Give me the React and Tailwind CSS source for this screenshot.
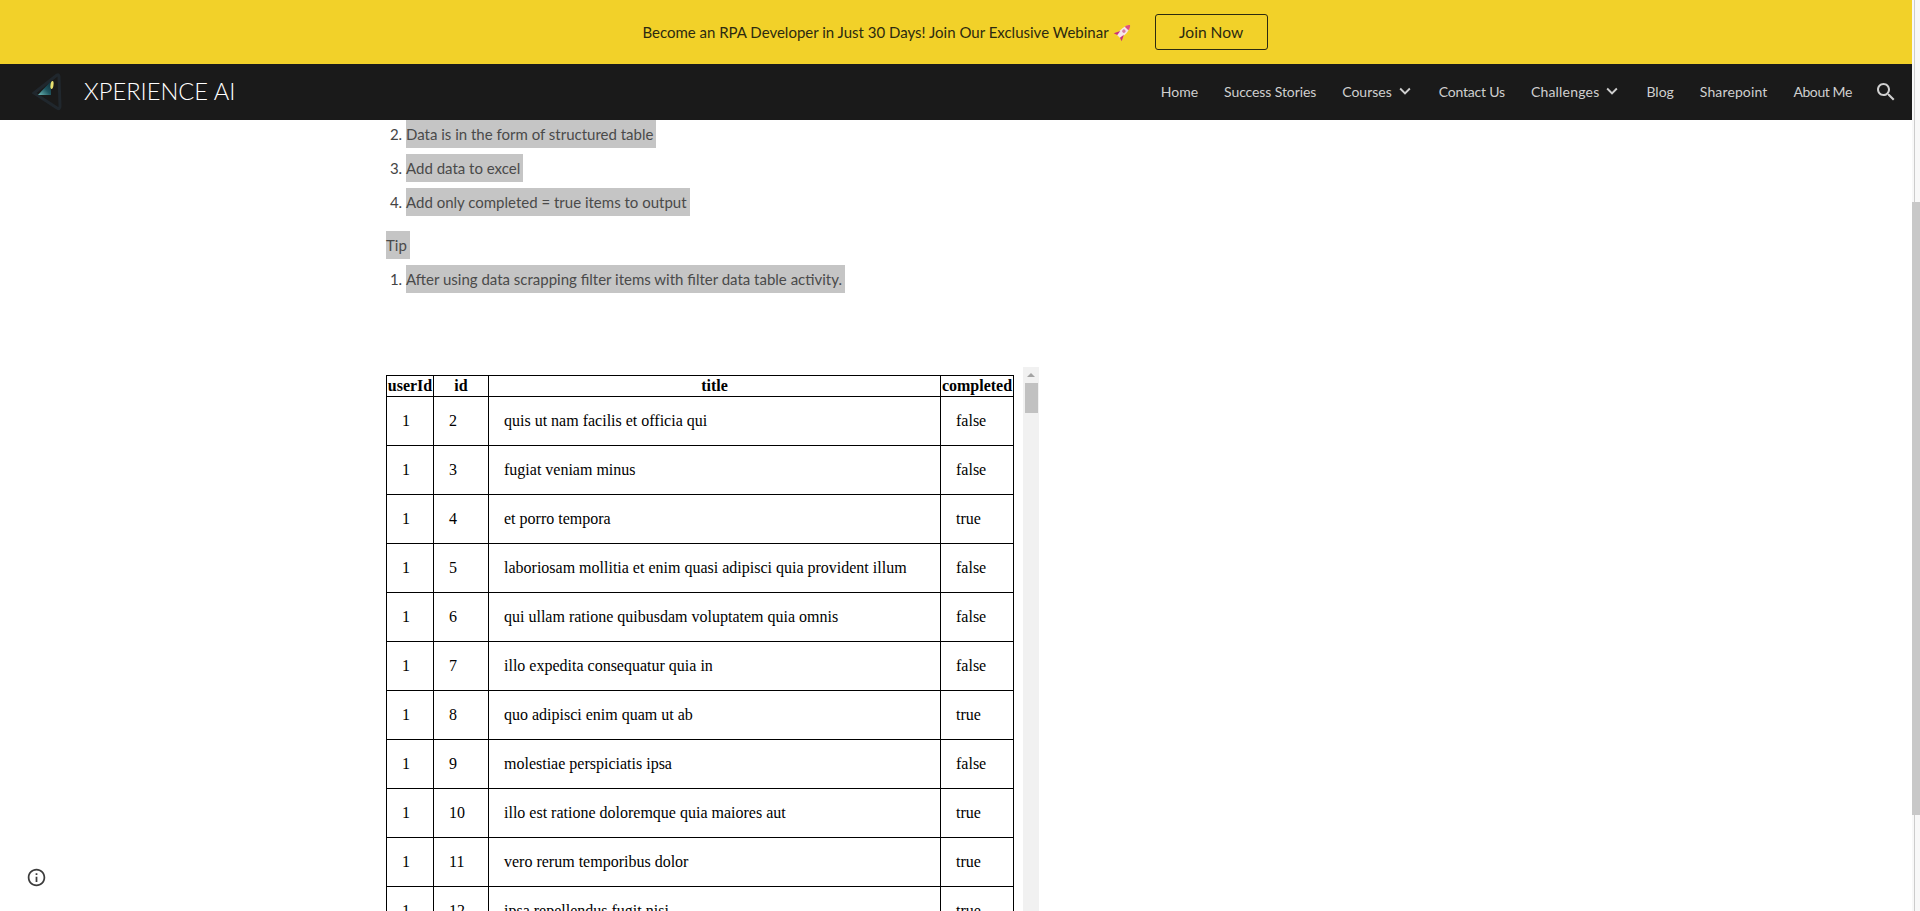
const navItems = [
  { label: "Home" },
  { label: "Success Stories", fit: "tracking-[-0.1px]" },
  { label: "Courses", menu: true },
  { label: "Contact Us", fit: "tracking-[-0.2px]" },
  { label: "Challenges", menu: true, fit: "tracking-[0.2px]" },
  { label: "Blog" },
  { label: "Sharepoint", fit: "tracking-[0.12px]" },
  { label: "About Me", fit: "tracking-[-0.4px]" },
];

const rows = [
  [1, 2, "quis ut nam facilis et officia qui", "false"],
  [1, 3, "fugiat veniam minus", "false"],
  [1, 4, "et porro tempora", "true"],
  [1, 5, "laboriosam mollitia et enim quasi adipisci quia provident illum", "false"],
  [1, 6, "qui ullam ratione quibusdam voluptatem quia omnis", "false"],
  [1, 7, "illo expedita consequatur quia in", "false"],
  [1, 8, "quo adipisci enim quam ut ab", "true"],
  [1, 9, "molestiae perspiciatis ipsa", "false"],
  [1, 10, "illo est ratione doloremque quia maiores aut", "true"],
  [1, 11, "vero rerum temporibus dolor", "true"],
  [1, 12, "ipsa repellendus fugit nisi", "true"],
];

const Logo = () => (
  <svg width="30" height="38" viewBox="0 0 30 38" className="shrink-0">
    <defs>
      <linearGradient id="wedge" x1="0" y1="1" x2="1" y2="0">
        <stop offset="0" stopColor="#6fbcb8" />
        <stop offset="0.5" stopColor="#1f5660" />
        <stop offset="1" stopColor="#0f2a33" />
      </linearGradient>
    </defs>
    <path d="M2 20 L25 2 Q27 1 27 4 L28 33 Q28 37 25 35 Z" fill="none" stroke="#20272d" strokeWidth="3" />
    <path d="M6 22 L19 8 L19 22 Z" fill="url(#wedge)" />
    <ellipse cx="20" cy="12" rx="1.5" ry="4" fill="#e8e070" transform="rotate(8 20 12)" />
  </svg>
);

const Rocket = () => (
  <svg width="20" height="20" viewBox="0 0 16 16" className="shrink-0">
    <g transform="rotate(45 8 8)">
      <path d="M8 0 C11 3 11 9 10 13 L6 13 C5 9 5 3 8 0 Z" fill="#f6e6ea" />
      <path d="M8 0 C9 1 10 2 10 4 L6 4 C6 2 7 1 8 0 Z" fill="#e0527a" />
      <path d="M6 9 L3.5 14 L6.5 13 Z M10 9 L12.5 14 L9.5 13 Z" fill="#c9327a" />
      <circle cx="8" cy="7" r="1.4" fill="#d77aa0" />
    </g>
  </svg>
);

const Highlight = ({ children }) => (
  <span className="inline-block h-7 bg-[#c5c5c5] pr-[3px] text-[#4a4a4a] leading-7">{children}</span>
);

export default function App() {
  return (
    <div className="flex h-screen overflow-hidden bg-white font-['Lato',sans-serif]">
      <div className="relative flex min-w-0 flex-1 flex-col">
        <div className="flex h-16 shrink-0 items-center justify-center bg-[#f2d129] pr-[2px]">
          <span className="text-[15px] text-[#2c2a10]">
            Become an RPA Developer in Just 30 Days! Join Our Exclusive Webinar
          </span>
          <span className="ml-1">
            <Rocket />
          </span>
          <button className="ml-[22px] h-9 w-[113px] rounded-[3px] border border-[#2c2a10] pt-px text-[15.6px] text-[#2c2a10]">
            Join Now
          </button>
        </div>

        <nav className="flex h-14 shrink-0 items-center bg-[#1a1a1a] pl-8 pr-[14px]">
          <Logo />
          <span className="ml-[22px] text-[23.7px] font-light text-white">XPERIENCE AI</span>
          <ul className="mb-0.5 ml-auto flex items-center gap-[26px] text-[14px] text-[#cfcfcf]">
            {navItems.map((item) => (
              <li key={item.label} className={`flex items-center ${item.fit || ""}`}>
                {item.label}
                {item.menu && (
                  <svg width="22" height="22" viewBox="0 0 24 24" fill="currentColor" className="ml-[2px] mr-[-3px]">
                    <path d="M16.59 8.59L12 13.17 7.41 8.59 6 10l6 6 6-6z" />
                  </svg>
                )}
              </li>
            ))}
          </ul>
          <svg width="24" height="24" viewBox="0 0 24 24" fill="#cfcfcf" className="ml-[22px]">
            <path d="M15.5 14h-.79l-.28-.27C15.41 12.59 16 11.11 16 9.5 16 5.91 13.09 3 9.5 3S3 5.91 3 9.5 5.91 16 9.5 16c1.61 0 3.09-.59 4.23-1.57l.27.28v.79l5 4.99L20.49 19l-4.99-5zm-6 0C7.01 14 5 11.99 5 9.5S7.01 5 9.5 5 14 7.01 14 9.5 11.99 14 9.5 14z" />
          </svg>
        </nav>

        <main className="min-h-0 flex-1 overflow-hidden pl-[386px] text-[15px] text-[#444444]">
          <ol start={2} className="list-decimal pl-5">
            <li className="h-7">
              <Highlight>Data is in the form of structured table</Highlight>
            </li>
            <li className="mt-1.5 h-7">
              <Highlight>Add data to excel</Highlight>
            </li>
            <li className="mt-1.5 h-7">
              <Highlight>Add only completed = true items to output</Highlight>
            </li>
          </ol>
          <p className="mt-[15px] h-7">
            <Highlight>Tip</Highlight>
          </p>
          <ol className="mt-1.5 list-decimal pl-5">
            <li className="h-7">
              <Highlight>After using data scrapping filter items with filter data table activity.</Highlight>
            </li>
          </ol>

          <div className="mt-[74px] flex h-[600px] items-start">
            <div className="w-[637px] shrink-0 pt-2">
              <table className="w-[627px] table-fixed border-collapse font-['Liberation_Serif',serif] text-[16px] leading-[18px] text-black">
                <colgroup>
                  <col className="w-[47px]" />
                  <col className="w-[55px]" />
                  <col className="w-[452px]" />
                  <col className="w-[73px]" />
                </colgroup>
                <thead>
                  <tr className="h-[21px]">
                    <th className="border border-black p-0">userId</th>
                    <th className="border border-black p-0">id</th>
                    <th className="border border-black p-0">title</th>
                    <th className="border border-black p-0">completed</th>
                  </tr>
                </thead>
                <tbody>
                  {rows.map((row) => (
                    <tr key={row[1]} className="h-[49px]">
                      {row.map((cell, i) => (
                        <td key={i} className="border border-black py-0 pl-[15px] pr-0">
                          {cell}
                        </td>
                      ))}
                    </tr>
                  ))}
                </tbody>
              </table>
            </div>
            <div className="relative h-full w-4 shrink-0 bg-[#f1f1f1]">
              <div className="mx-auto mt-[6px] h-0 w-0 border-x-[4px] border-b-[4px] border-x-transparent border-b-[#a3a3a3]" />
              <div className="mx-auto mt-[6px] h-[30px] w-[13px] bg-[#c1c1c1]" />
            </div>
          </div>
        </main>

        <svg width="21" height="21" viewBox="0 0 24 24" fill="#3c3c3c" className="absolute bottom-[23px] left-[26px]">
          <path d="M11 7h2v2h-2zm0 4h2v6h-2zm1-9C6.48 2 2 6.48 2 12s4.48 10 10 10 10-4.48 10-10S17.52 2 12 2zm0 18c-4.41 0-8-3.59-8-8s3.59-8 8-8 8 3.59 8 8-3.59 8-8 8z" />
        </svg>
      </div>

      <div className="relative w-2 shrink-0 bg-[#f8f8f8]">
        <div className="ml-[2px] h-full w-px bg-[#cccccc]" />
        <div className="absolute left-0 top-[202px] h-[613px] w-2 bg-[#c8c8c8]" />
      </div>
    </div>
  );
}
